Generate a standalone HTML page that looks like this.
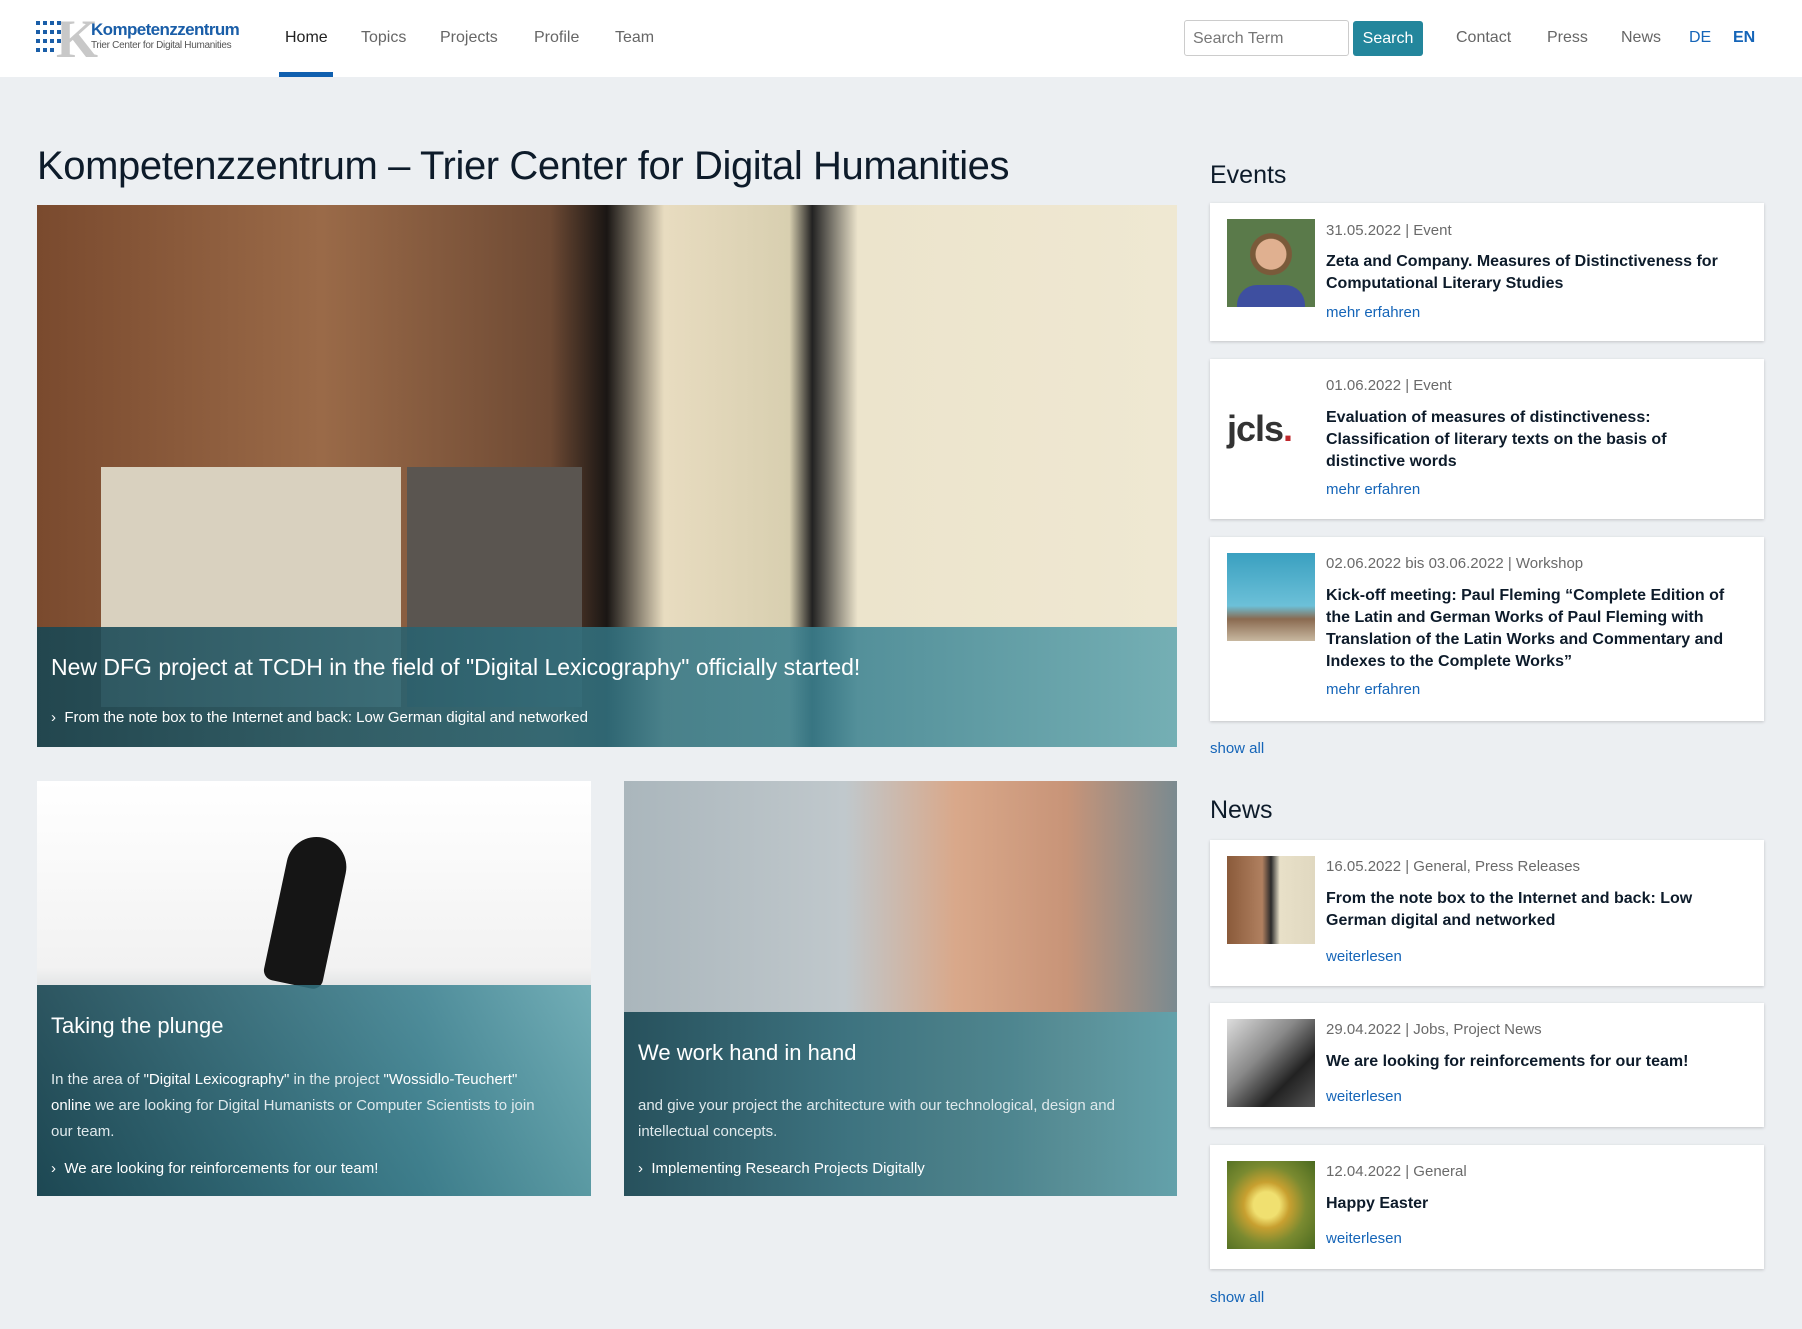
<!DOCTYPE html>
<html><head><meta charset="utf-8"><style>
*{margin:0;padding:0;box-sizing:border-box}
body{width:1802px;height:1329px;background:#eceff2;font-family:"Liberation Sans",sans-serif;position:relative;overflow:hidden;color:#0d1b2a}
.a{position:absolute;white-space:nowrap}
header{position:absolute;left:0;top:0;width:1802px;height:77px;background:#fff}
.nav{font-size:16px;color:#666;top:29px}
.card{position:absolute;background:#fff;box-shadow:0 1px 3px rgba(0,0,0,.18);left:1210px;width:554px}
.thumb{position:absolute;left:17px;width:88px;height:88px}
.date{position:absolute;left:116px;font-size:15px;color:#6a6a6a;white-space:nowrap}
.tt{position:absolute;left:116px;font-size:16px;font-weight:bold;line-height:22px;width:420px;color:#0d1b2a}
.lk{position:absolute;left:116px;font-size:15px;color:#1565b8;white-space:nowrap}
.ov{position:absolute;left:0;right:0;bottom:0;white-space:normal;background:linear-gradient(90deg,rgba(25,70,82,.9),rgba(60,130,145,.88) 70%,rgba(95,165,175,.85));color:#fff}
</style></head><body>
<header>
 <div class="a" style="left:36px;top:15px;width:58px;height:48px">
  <div style="position:absolute;left:20px;top:-2px;font:bold 54px/52px 'Liberation Serif',serif;color:#c8c8c8">K</div>
  <svg width="34" height="40" style="position:absolute;left:0;top:6px"><g fill="#1a5ea8">
  <rect x="0" y="0" width="4" height="4"/><rect x="7" y="0" width="4" height="4"/><rect x="14" y="0" width="4" height="4"/><rect x="21" y="0" width="4" height="4"/>
  <rect x="0" y="9" width="4" height="4"/><rect x="7" y="9" width="4" height="4"/><rect x="14" y="9" width="4" height="4"/><rect x="21" y="9" width="4" height="4"/>
  <rect x="0" y="18" width="4" height="4"/><rect x="7" y="18" width="4" height="4"/><rect x="14" y="18" width="4" height="4"/><rect x="21" y="18" width="4" height="4"/>
  <rect x="0" y="27" width="4" height="4"/><rect x="7" y="27" width="4" height="4"/><rect x="14" y="27" width="4" height="4"/></g></svg>
 </div>
 <div class="a" style="left:91px;top:20px;font-size:17px;font-weight:bold;color:#1a5ea8;letter-spacing:-.6px">Kompetenzzentrum</div>
 <div class="a" style="left:91px;top:40px;font-size:10px;color:#555;letter-spacing:-.3px">Trier Center for Digital Humanities</div>
 <div class="a nav" style="left:285px;color:#222">Home</div>
 <div class="a nav" style="left:361px">Topics</div>
 <div class="a nav" style="left:440px">Projects</div>
 <div class="a nav" style="left:534px">Profile</div>
 <div class="a nav" style="left:615px">Team</div>
 <div class="a" style="left:279px;top:72px;width:54px;height:5px;background:#1060b0"></div>
 <div class="a" style="left:1184px;top:20px;width:165px;height:36px;border:1px solid #ccc;border-radius:3px;font-size:16px;color:#777;padding:9px 8px">Search Term</div>
 <div class="a" style="left:1353px;top:21px;width:70px;height:35px;background:#23869c;border-radius:3px;color:#fff;font-size:16px;text-align:center;line-height:35px">Search</div>
 <div class="a nav" style="left:1456px">Contact</div>
 <div class="a nav" style="left:1547px">Press</div>
 <div class="a nav" style="left:1621px">News</div>
 <div class="a nav" style="left:1689px;color:#1565b8">DE</div>
 <div class="a nav" style="left:1733px;color:#1565b8;font-weight:bold">EN</div>
</header>

<div class="a" style="left:37px;top:144px;font-size:40px;letter-spacing:-.4px;color:#0d1b2a">Kompetenzzentrum – Trier Center for Digital Humanities</div>

<!-- hero -->
<div class="a" style="left:37px;top:205px;width:1140px;height:542px;overflow:hidden;background:linear-gradient(90deg,#7a4a2e 0%,#9a6a48 25%,#6e4a34 45%,#1a1614 50%,#e8dcc0 55%,#d8cfb0 66%,#222 68%,#ece4cc 72%,#efe8d2 100%)">
 <div style="position:absolute;left:64px;top:262px;width:300px;height:240px;background:#d9d1bf"></div>
 <div style="position:absolute;left:370px;top:262px;width:175px;height:240px;background:#5a5550"></div>
 <div class="ov" style="height:120px">
  <div class="a" style="left:14px;top:27px;font-size:23px">New DFG project at TCDH in the field of "Digital Lexicography" officially started!</div>
  <div class="a" style="left:14px;top:82px;font-size:15px">›&nbsp; From the note box to the Internet and back: Low German digital and networked</div>
 </div>
</div>

<!-- card1 -->
<div class="a" style="left:37px;top:781px;width:554px;height:415px;overflow:hidden;background:linear-gradient(#fff,#f2f2f2 45%,#9aa6aa 70%,#40565c)">
 <div style="position:absolute;left:240px;top:55px;width:60px;height:150px;background:#151515;border-radius:30px 30px 10px 10px;transform:rotate(12deg)"></div>
 <div class="ov" style="height:211px">
  <div class="a" style="left:14px;top:28px;font-size:22px">Taking the plunge</div>
  <div style="position:absolute;left:14px;top:82px;width:500px;font-size:15px;line-height:26px;color:#dfe9ec">In the area of <span style="color:#fff">"Digital Lexicography"</span> in the project <span style="color:#fff">"Wossidlo-Teuchert" online</span> we are looking for Digital Humanists or Computer Scientists to join our team.</div>
  <div class="a" style="left:14px;top:175px;font-size:15px">›&nbsp; We are looking for reinforcements for our team!</div>
 </div>
</div>

<!-- card2 -->
<div class="a" style="left:624px;top:781px;width:553px;height:415px;overflow:hidden;background:linear-gradient(90deg,#aab6bc,#c0c8cc 40%,#d9a88a 60%,#c89478 80%,#7a8a90)">
 <div class="ov" style="height:184px">
  <div class="a" style="left:14px;top:28px;font-size:22px">We work hand in hand</div>
  <div style="position:absolute;left:14px;top:81px;width:500px;font-size:15px;line-height:26px;color:#dfe9ec">and give your project the architecture with our technological, design and intellectual concepts.</div>
  <div class="a" style="left:14px;top:148px;font-size:15px">›&nbsp; Implementing Research Projects Digitally</div>
 </div>
</div>

<!-- Events -->
<div class="a" style="left:1210px;top:161px;font-size:25px">Events</div>
<div class="card" style="top:203px;height:138px">
 <div class="thumb" style="top:16px;background:radial-gradient(circle at 50% 40%,#e0b090 0 22%,#7a5a3a 23% 30%,#5a7a4a 31%),#4a6a3a"><div style="position:absolute;left:10px;bottom:0;width:68px;height:22px;background:#3e4fa0;border-radius:20px 20px 0 0"></div></div>
 <div class="date" style="top:19px">31.05.2022 | Event</div>
 <div class="tt" style="top:48px">Zeta and Company. Measures of Distinctiveness for Computational Literary Studies</div>
 <div class="lk" style="top:101px">mehr erfahren</div>
</div>
<div class="card" style="top:359px;height:160px">
 <div class="thumb" style="top:26px;font:bold 36px/88px 'Liberation Sans',sans-serif;color:#333;letter-spacing:-1px">jcls<span style="color:#c0282d">.</span></div>
 <div class="date" style="top:18px">01.06.2022 | Event</div>
 <div class="tt" style="top:48px">Evaluation of measures of distinctiveness: Classification of literary texts on the basis of distinctive words</div>
 <div class="lk" style="top:122px">mehr erfahren</div>
</div>
<div class="card" style="top:537px;height:184px">
 <div class="thumb" style="top:16px;background:linear-gradient(#3aa0c0,#6cc0d8 60%,#8a6a50 75%,#c8b8a0)"></div>
 <div class="date" style="top:18px">02.06.2022 bis 03.06.2022 | Workshop</div>
 <div class="tt" style="top:48px">Kick-off meeting: Paul Fleming “Complete Edition of the Latin and German Works of Paul Fleming with Translation of the Latin Works and Commentary and Indexes to the Complete Works”</div>
 <div class="lk" style="top:144px">mehr erfahren</div>
</div>
<div class="a" style="left:1210px;top:740px;font-size:15px;color:#1565b8">show all</div>

<!-- News -->
<div class="a" style="left:1210px;top:796px;font-size:25px">News</div>
<div class="card" style="top:840px;height:146px">
 <div class="thumb" style="top:16px;background:linear-gradient(90deg,#8a5a3a,#b08060 40%,#2a2a2a 50%,#e8e0c8 60%,#e0d8c0)"></div>
 <div class="date" style="top:18px">16.05.2022 | General, Press Releases</div>
 <div class="tt" style="top:48px">From the note box to the Internet and back: Low German digital and networked</div>
 <div class="lk" style="top:108px">weiterlesen</div>
</div>
<div class="card" style="top:1003px;height:124px">
 <div class="thumb" style="top:16px;background:linear-gradient(135deg,#ddd,#888 40%,#222 70%,#555)"></div>
 <div class="date" style="top:18px">29.04.2022 | Jobs, Project News</div>
 <div class="tt" style="top:48px">We are looking for reinforcements for our team!</div>
 <div class="lk" style="top:85px">weiterlesen</div>
</div>
<div class="card" style="top:1145px;height:124px">
 <div class="thumb" style="top:16px;background:radial-gradient(circle at 45% 50%,#f0e070 0 20%,#c8a030 35%,#7a8a30 60%,#4a6a20)"></div>
 <div class="date" style="top:18px">12.04.2022 | General</div>
 <div class="tt" style="top:48px">Happy Easter</div>
 <div class="lk" style="top:85px">weiterlesen</div>
</div>
<div class="a" style="left:1210px;top:1289px;font-size:15px;color:#1565b8">show all</div>
</body></html>
